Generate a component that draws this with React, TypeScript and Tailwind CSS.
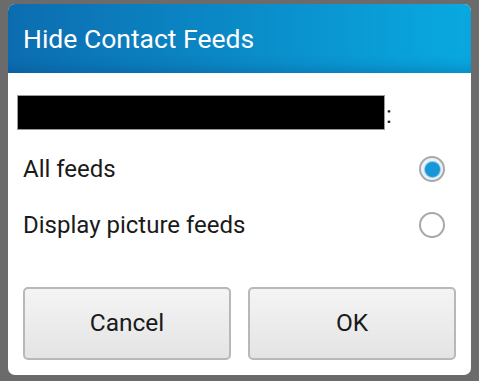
export default function App() {
  return (
    <div className="w-[479px] h-[381px] bg-[#6b6b6b] pt-[4px] pl-[8px] overflow-hidden" style={{ fontFamily: 'Roboto, "Noto Sans", sans-serif' }}>
      <div className="w-[463px] h-[371px] rounded-[7px] bg-white flex flex-col overflow-hidden">
        {/* title bar */}
        <div className="h-[69px] flex items-center pl-[15px] bg-[linear-gradient(to_right,#0c6db0,#09a9e0)] shadow-[inset_0_-12px_14px_-8px_rgba(0,60,120,0.3)]">
          <span className="text-white text-[26.5px]">Hide Contact Feeds</span>
        </div>

        <div className="flex items-center pl-[9px] mt-[22px] h-[35px]">
          <div className="w-[368px] h-[35px] bg-black border border-[#9a9a9a]" />
          <span className="text-[24px] text-[#1a1a1a] leading-none ml-[1px] mt-[4px]">:</span>
        </div>

        <div className="mt-[11px] flex flex-col">
          <div className="h-[56px] flex items-center justify-between pl-[15px] pr-[26px]">
            <span className="text-[24px] text-[#1a1a1a]">All feeds</span>
            <div className="w-[26px] h-[26px] rounded-full border-[2px] border-[#a8a8a8] bg-[#e8f3fa] flex items-center justify-center">
              <div className="w-[15px] h-[15px] rounded-full bg-[#1797d8] shadow-[0_0_0_1px_#8cc8ea]" />
            </div>
          </div>
          <div className="h-[56px] flex items-center justify-between pl-[15px] pr-[26px]">
            <span className="text-[24px] text-[#1a1a1a]">Display picture feeds</span>
            <div className="w-[26px] h-[26px] rounded-full border-[2px] border-[#a8a8a8] bg-white" />
          </div>
        </div>

        <div className="mt-auto mb-[15px] px-[15px] flex gap-[17px]">
          <button className="w-[208px] h-[73px] rounded-[5px] border-[2px] border-[#b8b8b8] bg-[linear-gradient(to_bottom,#f4f4f4,#e4e4e4)] text-[24.5px] text-[#1a1a1a]">
            Cancel
          </button>
          <button className="w-[208px] h-[73px] rounded-[5px] border-[2px] border-[#b8b8b8] bg-[linear-gradient(to_bottom,#f4f4f4,#e4e4e4)] text-[24.5px] text-[#1a1a1a]">
            OK
          </button>
        </div>
      </div>
    </div>
  )
}
